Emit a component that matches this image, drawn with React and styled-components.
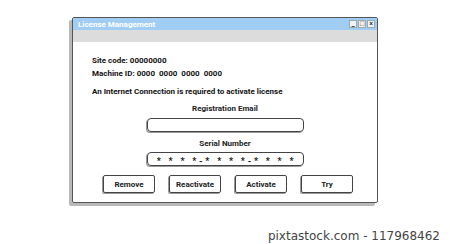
import styled, { createGlobalStyle } from "styled-components";

const GlobalStyle = createGlobalStyle`
  html, body {
    margin: 0;
    padding: 0;
    background: #ffffff;
  }
  body {
    font-family: Roboto, "Liberation Sans", sans-serif;
  }
`;

const Page = styled.div`
  width: 450px;
  height: 244px;
  position: relative;
  padding: 17px 0 0 72px;
  box-sizing: border-box;
  overflow: hidden;
`;

const Window = styled.div`
  width: 306px;
  height: 186px;
  box-sizing: border-box;
  border: 1.5px solid #555;
  border-radius: 2px;
  background: #fff;
  box-shadow: -3px 3px 0 #b9b9b9;
  display: flex;
  flex-direction: column;
`;

const TitleBar = styled.div`
  height: 12px;
  background: #9fcdf3;
  display: flex;
  align-items: center;
  justify-content: space-between;
  padding: 0 2px 0 5px;
`;

const Title = styled.span`
  color: #fff;
  font-size: 8px;
  font-weight: 700;
`;

const Controls = styled.div`
  display: flex;
  gap: 1px;
`;

const ControlBtn = styled.div`
  width: 8px;
  height: 8px;
  box-sizing: border-box;
  background: #f3f3f3;
  border: 1px solid #9aa;
  display: flex;
  align-items: center;
  justify-content: center;
  font-size: 7px;
  line-height: 1;
  color: #333;
  font-weight: 700;
`;

const MenuBand = styled.div`
  height: 12px;
  background: #dcdcdc;
`;

const Body = styled.div`
  flex: 1;
  padding: 12px 0 0 19px;
  color: #111;
  font-size: 8px;
  font-weight: 700;
`;

const Line = styled.div`
  height: 13px;
  line-height: 13px;
  margin-bottom: ${(p) => p.$gap || 0}px;
  white-space: pre;
`;

const Center = styled.div`
  display: flex;
  flex-direction: column;
  align-items: center;
  margin-left: -19px;
`;

const Label = styled.div`
  font-size: 8px;
  font-weight: 700;
  color: #222;
  height: 12px;
  line-height: 12px;
`;

const Field = styled.div`
  width: 157px;
  height: 14px;
  box-sizing: border-box;
  border: 1px solid #444;
  border-radius: 4px;
  box-shadow: -1px 1px 0 #999;
  margin: ${(p) => p.$m};
  display: flex;
  align-items: center;
  justify-content: center;
  font-size: 9px;
  font-weight: 700;
  letter-spacing: 2.75px;
  padding: 3px 0 0 3px;
  white-space: pre;
`;

const Buttons = styled.div`
  display: flex;
  margin-top: 9px;
  margin-left: 11px;
  gap: 14px;
`;

const Button = styled.div`
  width: 52px;
  height: 18px;
  box-sizing: border-box;
  border: 1px solid #444;
  border-radius: 2px;
  box-shadow: -1px 1px 0 #999;
  display: flex;
  align-items: center;
  justify-content: center;
  font-size: 8px;
  font-weight: 700;
  color: #222;
`;

const Stamp = styled.div`
  position: absolute;
  right: 10px;
  bottom: 1px;
  font-family: "DejaVu Sans", "Liberation Sans", sans-serif;
  font-size: 12px;
  color: #444;
`;

export default function App() {
  return (
    <Page>
      <GlobalStyle />
      <Window>
        <TitleBar>
          <Title>License Management</Title>
          <Controls>
            <ControlBtn>_</ControlBtn>
            <ControlBtn>□</ControlBtn>
            <ControlBtn>×</ControlBtn>
          </Controls>
        </TitleBar>
        <MenuBand />
        <Body>
          <Line>Site code: 00000000</Line>
          <Line $gap={5}>Machine ID: 0000  0000  0000  0000</Line>
          <Line $gap={5}>An Internet Connection is required to activate license</Line>
          <Center>
            <Label>Registration Email</Label>
            <Field $m="3px 0 6px" />
            <Label>Serial Number</Label>
            <Field $m="2px 0 0">* * * *-* * * *-* * * *</Field>
          </Center>
          <Buttons>
            <Button>Remove</Button>
            <Button>Reactivate</Button>
            <Button>Activate</Button>
            <Button>Try</Button>
          </Buttons>
        </Body>
      </Window>
      <Stamp>pixtastock.com - 117968462</Stamp>
    </Page>
  );
}
